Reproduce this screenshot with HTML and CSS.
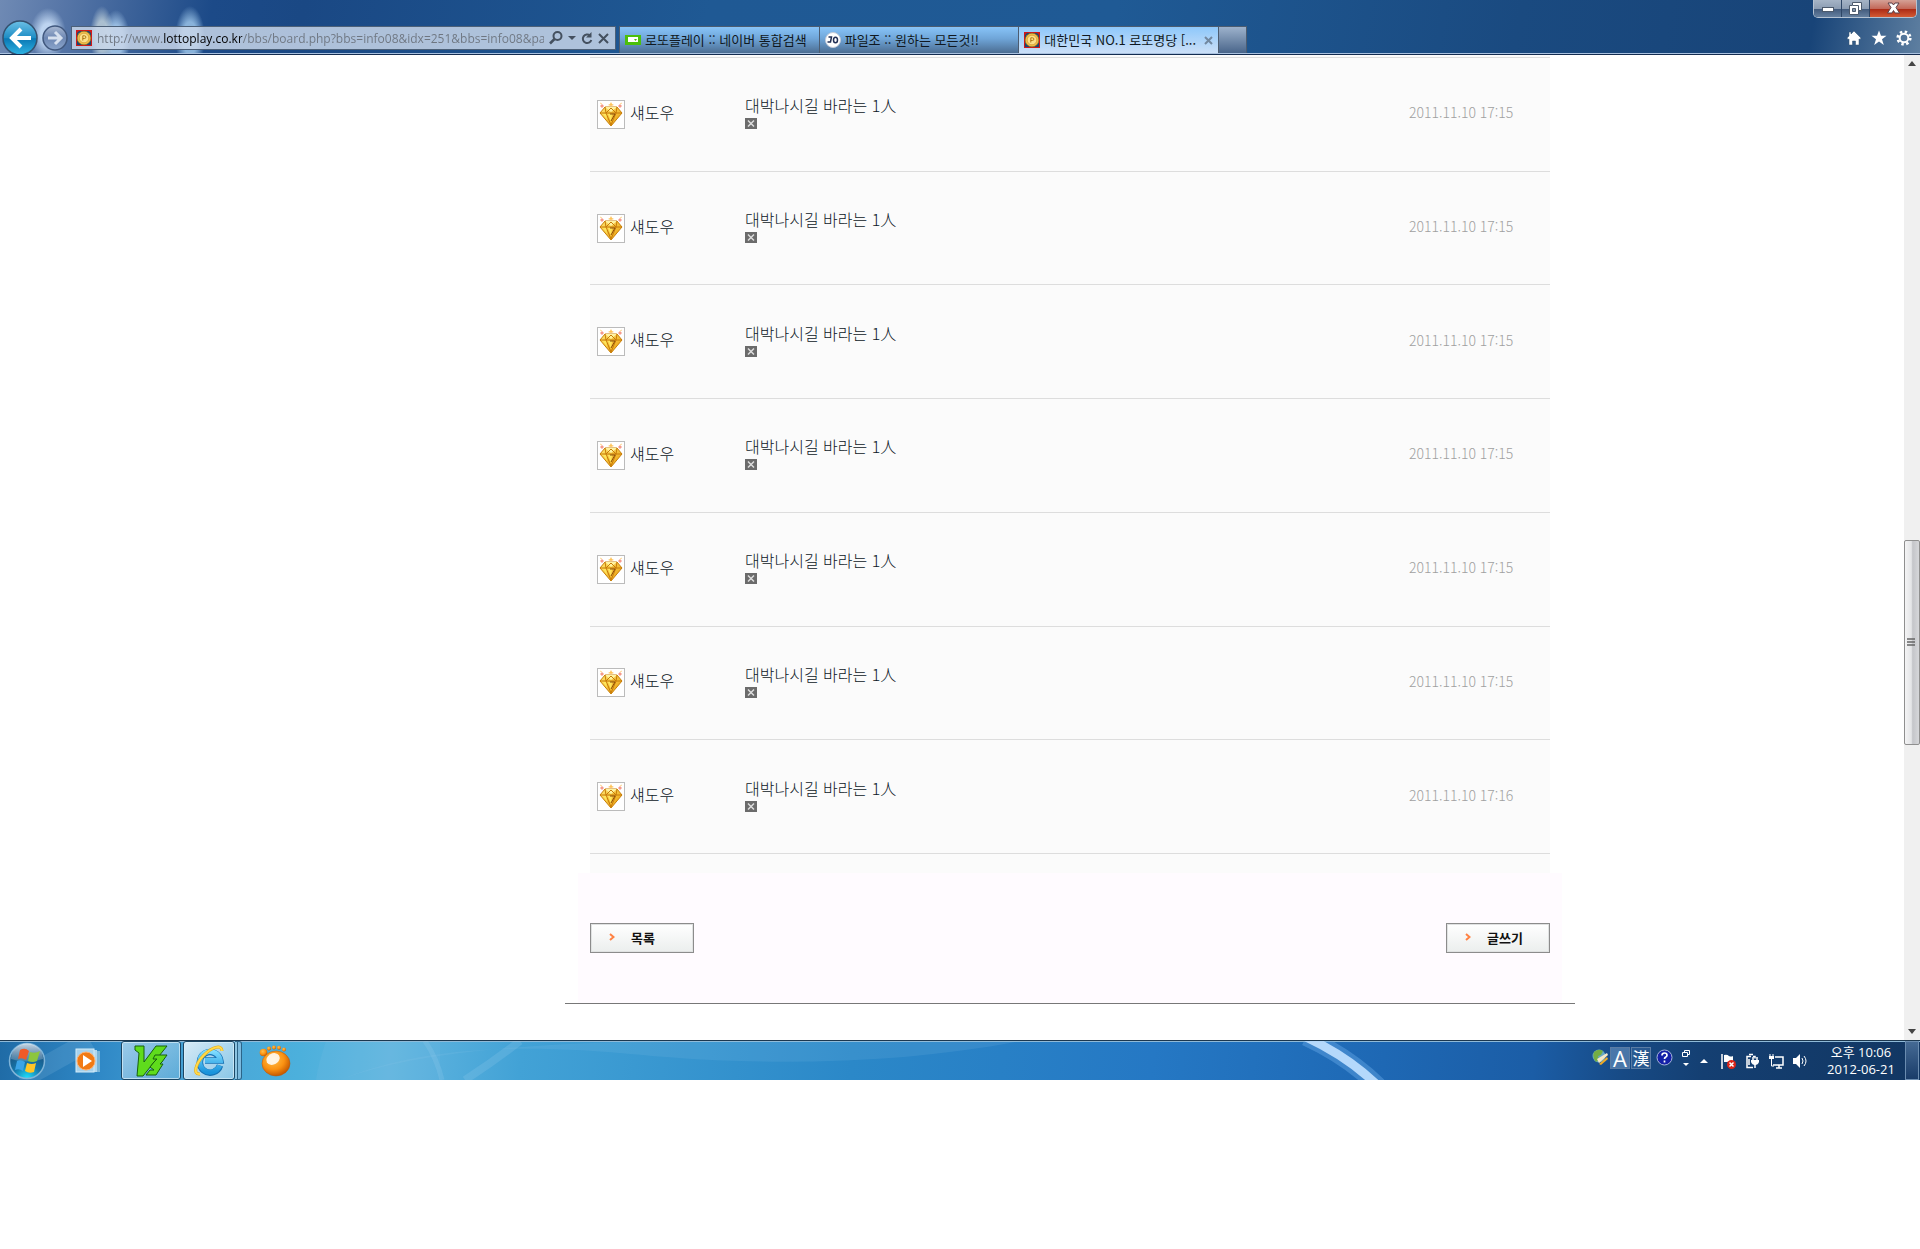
FILE: index.html
```html
<!DOCTYPE html>
<html lang="ko">
<head>
    <meta charset="UTF-8">
    <meta name="viewport" content="width=device-width, initial-scale=1.0">
    <title>대한민국 NO.1 로또명당</title>
    <link rel="stylesheet" href="styles.css">
</head>
<body>
    <!-- shared icons -->
    <svg class="defs" width="0" height="0" aria-hidden="true">
        <defs>
            <linearGradient id="gold" x1="0" y1="0" x2="1" y2="1">
                <stop offset="0" stop-color="#ffe873"/>
                <stop offset="1" stop-color="#e89600"/>
            </linearGradient>
            <radialGradient id="orange" cx="0.4" cy="0.35" r="0.65">
                <stop offset="0" stop-color="#ffc04a"/>
                <stop offset="0.6" stop-color="#fb9212"/>
                <stop offset="1" stop-color="#c75a00"/>
            </radialGradient>
            <radialGradient id="orb" cx="0.5" cy="1" r="0.9">
                <stop offset="0" stop-color="#1fe4ff"/>
                <stop offset="0.45" stop-color="#1577ac"/>
                <stop offset="1" stop-color="#1c4c78"/>
            </radialGradient>
            <linearGradient id="shine" x1="0" y1="0" x2="0" y2="1">
                <stop offset="0" stop-color="#e6f0f8" stop-opacity="0.85"/>
                <stop offset="1" stop-color="#9ab8d0" stop-opacity="0.3"/>
            </linearGradient>
            <linearGradient id="back" x1="0" y1="0" x2="0" y2="1">
                <stop offset="0" stop-color="#6cc0e6"/>
                <stop offset="0.5" stop-color="#1d8cc4"/>
                <stop offset="0.52" stop-color="#0a78b4"/>
                <stop offset="1" stop-color="#2fb4e4"/>
            </linearGradient>
            <linearGradient id="forward" x1="0" y1="0" x2="0" y2="1">
                <stop offset="0" stop-color="#a9b9d3"/>
                <stop offset="0.5" stop-color="#6d87b3"/>
                <stop offset="1" stop-color="#8ba5cb"/>
            </linearGradient>
            <linearGradient id="ie" x1="0" y1="0" x2="0" y2="1">
                <stop offset="0" stop-color="#7fdcff"/>
                <stop offset="1" stop-color="#1a94dc"/>
            </linearGradient>
        </defs>
        <symbol id="coin" viewBox="0 0 16 16">
            <rect width="16" height="16" fill="#d01818"/>
            <path d="M1 3v12h14V3l-2-2H3z" fill="#1d4670"/>
            <circle cx="8" cy="8" r="6.8" fill="#f0c04a" stroke="#a87418" stroke-width="0.6"/>
            <circle cx="8" cy="8" r="4.8" fill="#fbe08a" stroke="#d09a30" stroke-width="0.7"/>
            <path d="M6.8 10.500V5.800h1.700a1.300 1.300 0 0 1 0 2.700H6.800" fill="none" stroke="#b07a18" stroke-width="1"/>
        </symbol>
        <symbol id="gem" viewBox="0 0 26 27">
            <path d="M2 12L7 6h12l5 6-11 13z" fill="url(#gold)" stroke="#c98008" stroke-width="1"/>
            <path d="M7 6l6 5 6-5z" fill="#fff3a0"/>
            <path d="M2 12h22M8 12l5 12 5-12M7 6l1 6 5-5 5 5 1-6" fill="none" stroke="#c77a08" stroke-width="1"/>
            <path d="M5 13l4 6-1-6zM10 13l3 8 1-8z" fill="#ffe65c"/>
            <path d="M12 13h5l-4 7" fill="none" stroke="#8a4c08" stroke-width="1"/>
            <path d="M2 5l2-2 2 2-2 2zM22 3l2 2-2 2-2-2z" fill="#f59a8c"/>
            <path d="M13 1l1 2 2 1-3 1-3-1 2-1z" fill="#ffc35a"/>
            <path d="M2 2l2 1M24 2l-2 1" stroke="#ffd890" stroke-width="1"/>
        </symbol>
        <symbol id="delete" viewBox="0 0 12 11">
            <rect width="12" height="11" fill="#6b6b6b"/>
            <path d="M3 2.5l6 6M9 2.5l-6 6" stroke="#ddd" stroke-width="1.5"/>
        </symbol>
    </svg>

    <header class="browser">
        <div class="titlebar">
            <div class="window-buttons">
                <button type="button" class="win-btn" aria-label="최소화"><svg width="12" height="8" viewBox="0 0 12 8"><rect x="0.5" y="3.5" width="11" height="4" fill="#fff" stroke="#4c5a6c"/></svg></button>
                <button type="button" class="win-btn" aria-label="이전 크기로"><svg width="13" height="13" viewBox="0 0 13 13"><path d="M3.5.5h9v8h-3v4h-9v-9h3z" fill="#fff" stroke="#4c5a6c"/><path d="M3.5 6.500h3v3h-3z" fill="#8497ac" stroke="#4c5a6c"/><path d="M4 3.500h5.500v5" fill="none" stroke="#4c5a6c"/></svg></button>
                <button type="button" class="win-btn win-close" aria-label="닫기"><svg width="13" height="12" viewBox="0 0 13 12"><path d="M1 1h4l1.500 2L8 1h4L9 5.500 12.500 11H8L6.500 8.500 5 11H.5L4 5.500z" fill="#fff" stroke="#5c4048"/></svg></button>
            </div>
        </div>
        <div class="toolbar">
            <div class="nav-buttons">
                <button type="button" aria-label="뒤로"><svg width="36" height="36" viewBox="0 0 36 36"><circle cx="18" cy="18" r="17" fill="url(#back)" stroke="#34506e" stroke-width="1.500"/><path d="M29 18H10M19 9l-9 9 9 9" fill="none" stroke="#fff" stroke-width="4"/></svg></button>
                <button type="button" aria-label="앞으로"><svg width="26" height="26" viewBox="0 0 26 26"><circle cx="13" cy="13" r="12" fill="url(#forward)" stroke="#41587e" stroke-width="1.500"/><path d="M6 13h12M13 7l6 6-6 6" fill="none" stroke="#d5dfee" stroke-width="3"/></svg></button>
            </div>
            <form class="address">
                <svg width="16" height="16"><use href="#coin"/></svg>
                <input type="text" class="url" aria-label="주소" value="http://www.lottoplay.co.kr/bbs/board.php?bbs=info08&amp;idx=251&amp;bbs=info08&amp;page=1">
                <button type="button" class="icon-btn" aria-label="검색"><svg width="14" height="14" viewBox="0 0 14 14"><circle cx="8.500" cy="5" r="4" fill="none" stroke="#44505f" stroke-width="2"/><path d="M5.500 8L1 12.500" stroke="#44505f" stroke-width="2.500"/></svg></button>
                <button type="button" class="icon-btn" aria-label="주소 목록"><svg width="8" height="5" viewBox="0 0 8 5"><path d="M0 0h8L4 4z" fill="#44505f"/></svg></button>
                <button type="button" class="icon-btn" aria-label="새로 고침"><svg width="12" height="13" viewBox="0 0 12 13"><path d="M9 3.500A4.300 4.300 0 1 0 10.300 8" fill="none" stroke="#44505f" stroke-width="2"/><path d="M5 5.500h5.500V0z" fill="#44505f"/></svg></button>
                <button type="button" class="icon-btn" aria-label="중지"><svg width="11" height="11" viewBox="0 0 11 11"><path d="M1 1l9 9M10 1l-9 9" stroke="#44505f" stroke-width="2"/></svg></button>
            </form>
            <nav class="tabs">
                <a href="#" class="tab"><svg width="16" height="16" viewBox="0 0 16 16"><rect y="3" width="16" height="10" fill="#4bbf0c"/><rect x="3" y="5" width="10" height="5" fill="#fff"/><path d="M9 7h3l-1.500 2z" fill="#4bbf0c"/></svg><span>로또플레이 :: 네이버 통합검색</span></a>
                <a href="#" class="tab"><svg width="16" height="16" viewBox="0 0 16 16"><circle cx="8" cy="8" r="7.500" fill="#fff" stroke="#c5cbd8"/><path d="M3.500 5h3l-1 5H2.500" fill="none" stroke="#222f55" stroke-width="1.500"/><ellipse cx="10.500" cy="8" rx="2" ry="2.800" fill="none" stroke="#222f55" stroke-width="1.500"/></svg><span>파일조 :: 원하는 모든것!!</span></a>
                <a href="#" class="tab active"><svg width="16" height="16"><use href="#coin"/></svg><span>대한민국 NO.1 로또명당 [...</span><svg class="tab-close" width="9" height="9" viewBox="0 0 9 9"><path d="M1 1l7 7M8 1L1 8" stroke="#7288a0" stroke-width="2"/></svg></a>
                <button type="button" class="new-tab" aria-label="새 탭"></button>
            </nav>
            <div class="tools">
                <button type="button" class="icon-btn" aria-label="홈"><svg width="16" height="16" viewBox="0 0 16 16"><path d="M8 1l7 7-1 1.500-1-.5v6H9.500v-4h-3v4H3V9l-1 .5L1 8l2-2V2h2v2z" fill="#fff" stroke="#31506f" stroke-width="0.500"/></svg></button>
                <button type="button" class="icon-btn" aria-label="즐겨찾기"><svg width="16" height="16" viewBox="0 0 16 16"><path d="M8 .5l2 5.300h5.500L11 9.200l1.800 5.800L8 11.600 3.200 15 5 9.200.5 5.800H6z" fill="#fff"/></svg></button>
                <button type="button" class="icon-btn" aria-label="도구"><svg width="16" height="16" viewBox="0 0 16 16"><circle cx="8" cy="8" r="6.300" fill="none" stroke="#fff" stroke-width="2.600" stroke-dasharray="2.470 2.470"/><circle cx="8" cy="8" r="4.300" fill="none" stroke="#fff" stroke-width="2"/></svg></button>
            </div>
        </div>
    </header>

    <div class="viewport">
        <main class="page">
            <div class="board">
                <div class="comments">
                    <table class="comment-list">
                        <tbody>
                            <tr>
                                <td class="writer"><span class="avatar"><svg width="26" height="27"><use href="#gem"/></svg></span>섀도우</td>
                                <td class="message">대박나시길 바라는 1人<button type="button" class="delete" aria-label="삭제"><svg width="12" height="11"><use href="#delete"/></svg></button></td>
                                <td class="date">2011.11.10 17:15</td>
                            </tr>
                            <tr>
                                <td class="writer"><span class="avatar"><svg width="26" height="27"><use href="#gem"/></svg></span>섀도우</td>
                                <td class="message">대박나시길 바라는 1人<button type="button" class="delete" aria-label="삭제"><svg width="12" height="11"><use href="#delete"/></svg></button></td>
                                <td class="date">2011.11.10 17:15</td>
                            </tr>
                            <tr>
                                <td class="writer"><span class="avatar"><svg width="26" height="27"><use href="#gem"/></svg></span>섀도우</td>
                                <td class="message">대박나시길 바라는 1人<button type="button" class="delete" aria-label="삭제"><svg width="12" height="11"><use href="#delete"/></svg></button></td>
                                <td class="date">2011.11.10 17:15</td>
                            </tr>
                            <tr>
                                <td class="writer"><span class="avatar"><svg width="26" height="27"><use href="#gem"/></svg></span>섀도우</td>
                                <td class="message">대박나시길 바라는 1人<button type="button" class="delete" aria-label="삭제"><svg width="12" height="11"><use href="#delete"/></svg></button></td>
                                <td class="date">2011.11.10 17:15</td>
                            </tr>
                            <tr>
                                <td class="writer"><span class="avatar"><svg width="26" height="27"><use href="#gem"/></svg></span>섀도우</td>
                                <td class="message">대박나시길 바라는 1人<button type="button" class="delete" aria-label="삭제"><svg width="12" height="11"><use href="#delete"/></svg></button></td>
                                <td class="date">2011.11.10 17:15</td>
                            </tr>
                            <tr>
                                <td class="writer"><span class="avatar"><svg width="26" height="27"><use href="#gem"/></svg></span>섀도우</td>
                                <td class="message">대박나시길 바라는 1人<button type="button" class="delete" aria-label="삭제"><svg width="12" height="11"><use href="#delete"/></svg></button></td>
                                <td class="date">2011.11.10 17:15</td>
                            </tr>
                            <tr>
                                <td class="writer"><span class="avatar"><svg width="26" height="27"><use href="#gem"/></svg></span>섀도우</td>
                                <td class="message">대박나시길 바라는 1人<button type="button" class="delete" aria-label="삭제"><svg width="12" height="11"><use href="#delete"/></svg></button></td>
                                <td class="date">2011.11.10 17:16</td>
                            </tr>
                        </tbody>
                    </table>
                </div>
                <div class="actions">
                    <button type="button" class="board-btn"><svg width="6" height="8" viewBox="0 0 6 8"><path d="M1 1l3.500 3L1 7" fill="none" stroke="#ff8243" stroke-width="2"/></svg>목록</button>
                    <button type="button" class="board-btn"><svg width="6" height="8" viewBox="0 0 6 8"><path d="M1 1l3.500 3L1 7" fill="none" stroke="#ff8243" stroke-width="2"/></svg>글쓰기</button>
                </div>
            </div>
        </main>
        <div class="scrollbar">
            <svg width="16" height="17" viewBox="0 0 16 17"><path d="M4 11h8L8 6z" fill="#444"/></svg>
            <div class="thumb"><svg width="8" height="9" viewBox="0 0 8 9"><path d="M0 1h8M0 4h8M0 7h8" stroke="#666" stroke-width="1.500"/></svg></div>
            <svg class="down" width="16" height="17" viewBox="0 0 16 17"><path d="M4 6h8l-4 5z" fill="#444"/></svg>
        </div>
    </div>

    <footer class="taskbar">
        <svg class="streaks" viewBox="0 0 1920 40" preserveAspectRatio="none" aria-hidden="true">
            <path d="M326 0Q318 24 316 40H440V0z" fill="#8fc8e8" opacity="0.120"/>
            <path d="M340 40C420 6 520 2 640 14S900 24 1020 0H700Q440 0 340 40z" fill="#9fd0f0" opacity="0.120"/>
            <path d="M425 0q12 18 17 40" fill="none" stroke="#9fd4f0" stroke-width="5" opacity="0.200"/>
            <path d="M465 40Q495 20 520 0" fill="none" stroke="#9fd4f0" stroke-width="8" opacity="0.200"/>
            <path d="M20 40L90 0" stroke="#a8d4f0" stroke-width="20" opacity="0.150"/>
            <path d="M1306-4q42 20 72 50" fill="none" stroke="#6eb0ec" stroke-width="18" opacity="0.400"/>
            <path d="M1306-4q42 20 72 50" fill="none" stroke="#b4d8fb" stroke-width="9"/>
        </svg>
        <div class="launchers">
            <button type="button" class="start" aria-label="시작"><svg width="38" height="38" viewBox="0 0 38 38"><circle cx="19" cy="19" r="17.500" fill="url(#orb)" stroke="#7fb4d8" stroke-width="1.500"/><path d="M3 17a16 15.500 0 0 1 32 0Q19 22 3 17z" fill="url(#shine)"/><path d="M12 8q5-3 9 1l-3 9q-4-3-8-1z" fill="#ef5a28"/><path d="M22 10q5 2 10-1l-3 10q-4 2-9 0z" fill="#8cc63e"/><path d="M9 19q4-2 8 1l-2 9q-4-3-8-1z" fill="#3ba4e8"/><path d="M19 21q5 2 9 0l-2 9q-5 2-9-1z" fill="#ffc627"/></svg></button>
            <button type="button" class="task-btn media" aria-label="미디어 플레이어"><svg width="32" height="32" viewBox="0 0 32 32"><path d="M22 6h4v21h-4z" fill="#79b5d9"/><path d="M19 5h4v22h-4z" fill="#b0d7ee"/><rect x="2" y="4" width="18" height="23" fill="#a6d2ed" stroke="#d4ecf8"/><circle cx="12" cy="16" r="9" fill="#f17a14" stroke="#ffb070"/><path d="M9 10l9 6-9 6z" fill="#fff"/></svg></button>
            <button type="button" class="task-btn open" aria-label="V3"><svg width="34" height="32" viewBox="0 0 34 32"><path d="M1 1h9v16L22 1h11L9 31H3L5 8 1 5z" fill="#5fdc1c" stroke="#17600c"/><path d="M21 10h12l-5 7-2 2h3l-7 11H12l4-5h4l-4-3 4-5 3-3h-4z" fill="#5fdc1c" stroke="#17600c"/></svg></button>
            <button type="button" class="task-btn open current" aria-label="Internet Explorer"><svg width="32" height="32" viewBox="0 0 32 32"><path d="M27 20.500A10.300 10.300 0 1 1 27.300 15.500H12" fill="none" stroke="#1673b5" stroke-width="6.500"/><path d="M26.700 20.500A10.300 10.300 0 1 1 27.300 15.500H12" fill="none" stroke="url(#ie)" stroke-width="5"/><path d="M7 29C-1 30 3 18 11 10S29-1 29 6" fill="none" stroke="#e8a90c" stroke-width="3"/><path d="M7 29C-1 30 3 18 11 10S29-1 29 6" fill="none" stroke="#ffd94a" stroke-width="2"/></svg></button>
            <span class="stack"></span>
            <button type="button" class="task-btn gom" aria-label="곰플레이어"><svg width="32" height="32" viewBox="0 0 32 32"><circle cx="4.500" cy="7.500" r="3.800" fill="url(#orange)"/><circle cx="10" cy="3.500" r="2" fill="url(#orange)"/><circle cx="15" cy="2.500" r="2" fill="url(#orange)"/><circle cx="20" cy="2.700" r="2" fill="url(#orange)"/><circle cx="25" cy="4.500" r="2" fill="url(#orange)"/><ellipse cx="17" cy="18.500" rx="14" ry="12.500" fill="url(#orange)" stroke="#b95608" stroke-width="0.500"/><ellipse cx="14" cy="14" rx="7" ry="5.500" fill="#fff" opacity="0.850" transform="rotate(-30 14 14)"/></svg></button>
        </div>
        <div class="tray">
            <div class="language">
                <svg width="17" height="17" viewBox="0 0 17 17"><circle cx="7" cy="7" r="6.500" fill="#66a9c4"/><path d="M2 3q5-4 9-1l-2 4-3 1 1 4-3 2Q0 9 2 3z" fill="#74ad43"/><path d="M5 10l2 4 9-8-1-2z" fill="#f5e8c8"/><path d="M7 15l8-7 1 2-7 6z" fill="#edaa28"/></svg>
                <button type="button" class="ime latin">A</button>
                <button type="button" class="ime">漢</button>
                <svg class="help" width="17" height="17" viewBox="0 0 17 17"><circle cx="8.500" cy="8.500" r="7.500" fill="#1420a8" stroke="#a8b4dc"/><path d="M6 6.500q0-2.500 2.500-2.500T11 6.300q0 1.200-1.500 2-1 .6-1 1.700M8.500 11.500v2" fill="none" stroke="#fff" stroke-width="1.700"/></svg>
                <svg width="10" height="18" viewBox="0 0 10 18"><path d="M3.500 3V1.500h5v4H6M1.500 3.500h5v4h-5z" fill="none" stroke="#fff"/><path d="M2 14h6l-3 3z" fill="#fff"/></svg>
            </div>
            <div class="status">
                <svg class="more" width="9" height="5" viewBox="0 0 9 5"><path d="M0 5h8L4 1z" fill="#fff"/></svg>
                <svg width="16" height="16" viewBox="0 0 16 16"><path d="M2 1v15" stroke="#fff" stroke-width="1.500"/><path d="M4 2q3-1 5 1 2 1 4 0v6H4z" fill="#fff"/><circle cx="11.500" cy="11.500" r="4.500" fill="#dc2418"/><path d="M9.500 9.500l4 4M13.500 9.500l-4 4" stroke="#fff" stroke-width="1.500"/></svg>
                <svg width="16" height="16" viewBox="0 0 16 16"><path d="M7 3.500H3v11h6M5 1.500h4M9 3.500h2v2M5 6v6" fill="none" stroke="#fff" stroke-width="1.500"/><path d="M7 7h8v2q-1 3-4 3T7 9z" fill="#fff"/><path d="M9 4v3M13 4v3M11 11v4" stroke="#fff" stroke-width="1.500"/></svg>
                <svg width="16" height="16" viewBox="0 0 16 16"><path d="M7 4h8v8H5M8 15h6M11 12v3" fill="none" stroke="#fff" stroke-width="1.500"/><path d="M1 3h5v3H1z" fill="#fff"/><path d="M2 1v2M5 1v2M3.500 6v7H6" fill="none" stroke="#fff"/></svg>
                <svg width="16" height="16" viewBox="0 0 16 16"><path d="M1 5h3l4-4v14l-4-4H1z" fill="#fff"/><path d="M10 5q2 3 0 6M12 3q4 5 0 10" fill="none" stroke="#fff"/></svg>
            </div>
            <div class="clock">
                <div>오후 10:06</div>
                <div>2012-06-21</div>
            </div>
            <button type="button" class="show-desktop" aria-label="바탕 화면 보기"></button>
        </div>
    </footer>
</body>
</html>
```
FILE: styles.css
```css
* {
    margin: 0;
    padding: 0;
    box-sizing: border-box;
}

body {
    font-family: "Noto Sans CJK KR", sans-serif;
    background: #fff;
    color: #0c1626;
}

button {
    font-family: inherit;
    background: none;
    border: none;
    cursor: pointer;
}

svg {
    display: block;
    flex: none;
}

.defs {
    position: absolute;
}

/* browser frame */
.browser {
    height: 55px;
    overflow: hidden;
    background:
        linear-gradient(#a9c1df, #a9c1df) 0 100% / 100% 1px no-repeat,
        radial-gradient(ellipse 18px 26px at 48px 34px, rgba(200, 222, 248, 0.9) 40%, transparent),
        radial-gradient(ellipse 12px 30px at 102px 36px, rgba(195, 212, 220, 0.8) 50%, transparent),
        radial-gradient(ellipse 14px 30px at 116px 40px, rgba(175, 210, 242, 0.8) 50%, transparent),
        radial-gradient(ellipse 15px 32px at 190px 38px, rgba(155, 196, 232, 0.85) 50%, transparent),
        linear-gradient(100deg, #6f8ab4 0, #5877a8 60px, #1c4a88 210px, #1a4884 300px, #1f5994 700px, #1f5a95 1100px, #1a4a80 1500px, #184478 1790px, #6484a4 1910px);
    border-bottom: 1px solid #142c50;
}

.titlebar {
    height: 20px;
    display: flex;
    justify-content: flex-end;
    padding-right: 3px;
}

.window-buttons {
    display: flex;
    height: 18px;
    border: 1px solid #b4c2d2;
    border-top: none;
    border-radius: 0 0 5px 5px;
    overflow: hidden;
}

.win-btn {
    display: flex;
    align-items: center;
    justify-content: center;
    width: 28px;
    padding-bottom: 1px;
    background: linear-gradient(#a5b4c6 0, #8c9db3 50%, #40597b 51%, #66809f 100%);
    border-right: 1px solid #2e4666;
}

.win-close {
    width: 46px;
    background: linear-gradient(#d5a196 0, #c3695a 50%, #a92814 51%, #d45a34 100%);
    border-right: none;
}

.toolbar {
    display: flex;
    align-items: center;
    gap: 3px;
    height: 36px;
    padding: 0 8px 0 2px;
}

.nav-buttons {
    display: flex;
    align-items: center;
    gap: 4px;
}

.address {
    display: flex;
    align-items: center;
    gap: 5px;
    flex: 0 1 545px;
    min-width: 0;
    height: 24px;
    padding: 0 6px 0 4px;
    background: rgba(200, 214, 233, 0.85);
    border: 1px solid #4c6078;
}

.url {
    flex: 1;
    min-width: 0;
    height: 22px;
    border: none;
    outline: none;
    font-family: "Open Sans", "Noto Sans CJK KR", sans-serif;
    font-size: 12px;
    color: transparent;
    /* domain part is darker than the rest of the address */
    background: linear-gradient(90deg, #6e7681 66px, #000 66px, #000 145px, #6e7681 145px);
    -webkit-background-clip: text;
    background-clip: text;
}

.tabs {
    display: flex;
    align-self: flex-start;
    flex: 0 1 628px;
    min-width: 0;
    height: 27px;
    margin-top: 6px;
    border: 1px solid #4c5c70;
    border-bottom: none;
}

.tab {
    display: flex;
    align-items: center;
    gap: 4px;
    flex: 1;
    min-width: 0;
    padding: 0 5px;
    font-size: 13px;
    line-height: 20px;
    color: #101820;
    text-decoration: none;
    white-space: nowrap;
    background: linear-gradient(#88c4f8, #6fa5d8 45%, #4b6d92);
    border-right: 1px solid #4c5c70;
}

.tab span {
    overflow: hidden;
}

.tab.active {
    background: linear-gradient(#8ec8fb, #cbdff7);
}

.tab-close {
    margin-left: auto;
}

.new-tab {
    width: 27px;
    background: linear-gradient(#9db2cc, #49658a);
}

.tools {
    display: flex;
    gap: 9px;
    margin-left: auto;
}

/* page area */
.viewport {
    display: flex;
}

.page {
    flex: 1;
    min-width: 0;
    padding: 0 0 36px 236px;
}

.board {
    max-width: 1010px;
    margin: 0 auto;
    border-bottom: 1px solid #777;
}

.comments {
    margin: 0 25px;
    padding: 2px 0 19px;
    background: #fbfbfb;
}

.comment-list {
    width: 100%;
    height: 797px;
    border-collapse: separate;
    border-spacing: 0;
    border-top: 1px solid #ddd;
    font-size: 16px;
    font-weight: 300;
    line-height: 18px;
}

.comment-list td {
    border-bottom: 1px solid #ddd;
    vertical-align: middle;
}

.comment-list .writer {
    width: 155px;
    padding-left: 7px;
}

.avatar {
    display: inline-block;
    margin-right: 5px;
    border: 1px solid #bbb;
    background: #fff;
    vertical-align: middle;
}

.comment-list .message {
    padding-bottom: 3px;
}

.delete {
    display: block;
    margin-top: 4px;
}

.comment-list .date {
    width: 141px;
    padding-bottom: 4px;
    font-size: 14px;
    color: #a0a0a0;
}

.actions {
    display: flex;
    justify-content: space-between;
    margin: 0 13px;
    padding: 50px 12px;
    background: #fffbff;
}

.board-btn {
    display: flex;
    align-items: center;
    gap: 16px;
    width: 104px;
    height: 30px;
    padding: 0 0 2px 18px;
    font-size: 13px;
    font-weight: 700;
    color: #111;
    background: linear-gradient(#fff, #ebeeed);
    border: 1px solid #8c8c8c;
    box-shadow: inset 0 0 0 1px #e0e2e2;
}

.scrollbar {
    display: flex;
    flex-direction: column;
    flex: none;
    width: 16px;
    background: #f0f0f0;
}

.thumb {
    display: flex;
    align-items: center;
    justify-content: center;
    height: 205px;
    margin-top: 468px;
    padding-right: 2px;
    background: linear-gradient(90deg, #f4f4f5, #e4e5e7 45%, #c4c5c9 55%, #d6d7da);
    border: 1px solid #8f8f8f;
    border-radius: 2px;
}

.down {
    margin-top: auto;
}

/* taskbar */
.taskbar {
    position: relative;
    display: flex;
    justify-content: space-between;
    height: 40px;
    border-top: 1px solid #1c3850;
    box-shadow: inset 0 1px 0 #8fbad8;
    background: linear-gradient(95deg, #1f6ba6 0, #2f88c6 100px, #48a4d6 200px, #4cb0dc 300px, #62b6e0 390px, #42a2d6 520px, #2b88c8 850px, #2578c4 1150px, #1e68b4 1380px, #1b5da6 1530px, #174a85 1620px, #143f72 1700px, #123763 1900px);
}

.streaks {
    position: absolute;
    inset: 0;
    width: 100%;
    height: 100%;
}

.launchers,
.tray {
    position: relative;
    display: flex;
}

.start {
    padding-left: 8px;
}

.task-btn {
    display: flex;
    align-items: center;
    justify-content: center;
}

.media {
    width: 75px;
    padding-left: 12px;
}

.open {
    width: 60px;
    margin-right: 2px;
    background: linear-gradient(135deg, rgba(210, 235, 250, 0.65), rgba(140, 195, 225, 0.35));
    border: 1px solid #1b4664;
    border-radius: 3px;
    box-shadow: inset 0 0 0 1px rgba(220, 240, 250, 0.7);
}

.current {
    width: 52px;
    margin-right: 0;
    background: linear-gradient(135deg, rgba(240, 248, 253, 0.85), rgba(180, 218, 240, 0.6));
}

.stack {
    width: 7px;
    border: 1px solid #2b6488;
    border-left: none;
    border-radius: 0 3px 3px 0;
    background: linear-gradient(90deg, #8cc4e2 2px, #2b6488 2px, #2b6488 3px, #7cbade 3px);
}

.gom {
    padding-left: 17px;
}

.tray {
    align-items: center;
}

.language {
    display: flex;
    align-items: center;
    gap: 1px;
    padding-bottom: 6px;
}

.ime {
    width: 20px;
    height: 22px;
    font-size: 17px;
    line-height: 20px;
    color: #fff;
    background: rgba(120, 160, 205, 0.2);
    border: 1px solid #5a7ca4;
}

.latin {
    font-family: "Open Sans", sans-serif;
    font-size: 22px;
    background: rgba(150, 185, 220, 0.4);
}

.help {
    margin: 0 7px 0 4px;
}

.status {
    display: flex;
    align-items: center;
    gap: 8px;
    margin-left: 9px;
}

.more {
    margin-right: 3px;
}

.clock {
    width: 88px;
    margin-left: 9px;
    font-family: "Open Sans", "Noto Sans CJK KR", sans-serif;
    font-size: 13px;
    line-height: 17px;
    color: #fff;
    text-align: center;
}

.show-desktop {
    align-self: stretch;
    width: 14px;
    margin-right: 1px;
    background: linear-gradient(#456a94, #193c69);
    border: 1px solid #6a8cb0;
}
```
